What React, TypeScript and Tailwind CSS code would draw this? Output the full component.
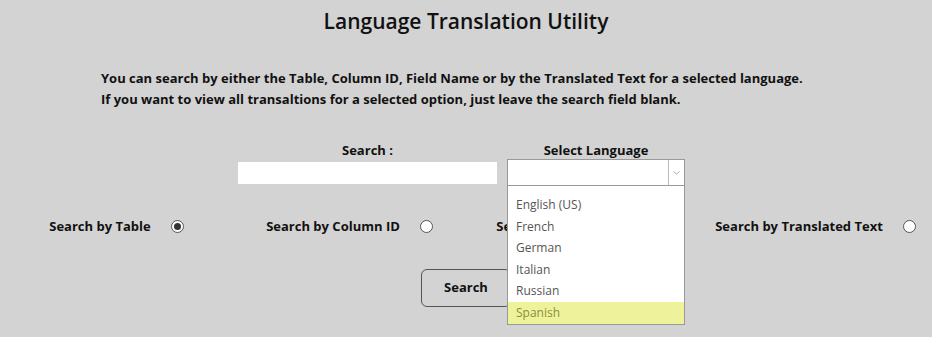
const languages = ["English (US)", "French", "German", "Italian", "Russian", "Spanish"];

const options = [
  { label: "Search by Table", checked: true },
  { label: "Search by Column ID", checked: false },
  { label: "Search by Field Name", checked: false },
  { label: "Search by Translated Text", checked: false },
];

const Radio = ({ checked }: { checked: boolean }) => (
  <span className="flex h-[13px] w-[13px] shrink-0 items-center justify-center rounded-full border border-[#555] bg-white">
    {checked && <span className="h-[7px] w-[7px] rounded-full bg-[#333]" />}
  </span>
);

const App = () => {
  return (
    <div className="h-[337px] w-[932px] overflow-hidden bg-[#d3d3d3] font-['Open_Sans',sans-serif] text-[#111]">
      {/* Title */}
      <h1 className="pt-[9px] text-center text-[21px] font-semibold leading-[24px]">
        Language Translation Utility
      </h1>

      {/* Instructions */}
      <div className="mt-[35px] pl-[101px] text-[13px] font-bold leading-[21px]">
        <p>You can search by either the Table, Column ID, Field Name or by the Translated Text for a selected language.</p>
        <p>If you want to view all transaltions for a selected option, just leave the search field blank.</p>
      </div>

      {/* Search + language */}
      <div className="mt-[31px] flex items-start pl-[238px]">
        <div className="flex w-[259px] flex-col items-center">
          <label className="text-[13px] font-bold leading-[18px]">Search :</label>
          <input className="mt-[3px] h-[22px] w-[259px] bg-white outline-none" />
        </div>
        <div className="relative ml-[10px] flex w-[178px] flex-col items-center">
          <label className="text-[13px] font-bold leading-[18px]">Select Language</label>
          <div className="flex h-[27px] w-[178px] border border-[#999] bg-white">
            <div className="flex-1" />
            <div className="flex w-[16px] items-center justify-center border-l border-[#bbb]">
              <svg width="7" height="4" viewBox="0 0 7 4">
                <path d="M0.5 0.5 L3.5 3 L6.5 0.5" fill="none" stroke="#aaa" strokeWidth="1" />
              </svg>
            </div>
          </div>
          {/* Open menu */}
          <ul className="absolute left-0 top-[45px] z-10 w-[178px] border border-t-0 border-[#999] bg-white pt-[8px] font-['Open_Sans',sans-serif] text-[12px] text-[#555]">
            {languages.map((lang) => (
              <li
                key={lang}
                className={
                  lang === "Spanish"
                    ? "h-[22px] bg-[#eef39b] pl-[8px] leading-[22px] text-[#8a8f3c]"
                    : "h-[21.5px] pl-[8px] leading-[21px]"
                }
              >
                {lang}
              </li>
            ))}
          </ul>
        </div>
      </div>

      {/* Radio options */}
      <div className="mt-[31px] grid grid-cols-4">
        {options.map((o) => (
          <div key={o.label} className="flex items-center justify-center gap-[20px]">
            <span className="text-[13px] font-bold">{o.label}</span>
            <Radio checked={o.checked} />
          </div>
        ))}
      </div>

      {/* Button */}
      <div className="mt-[32px] pl-[421px]">
        <button className="h-[38px] w-[90px] rounded-[6px] border border-[#555] text-[13px] font-bold">
          Search
        </button>
      </div>
    </div>
  );
};

export default App;
